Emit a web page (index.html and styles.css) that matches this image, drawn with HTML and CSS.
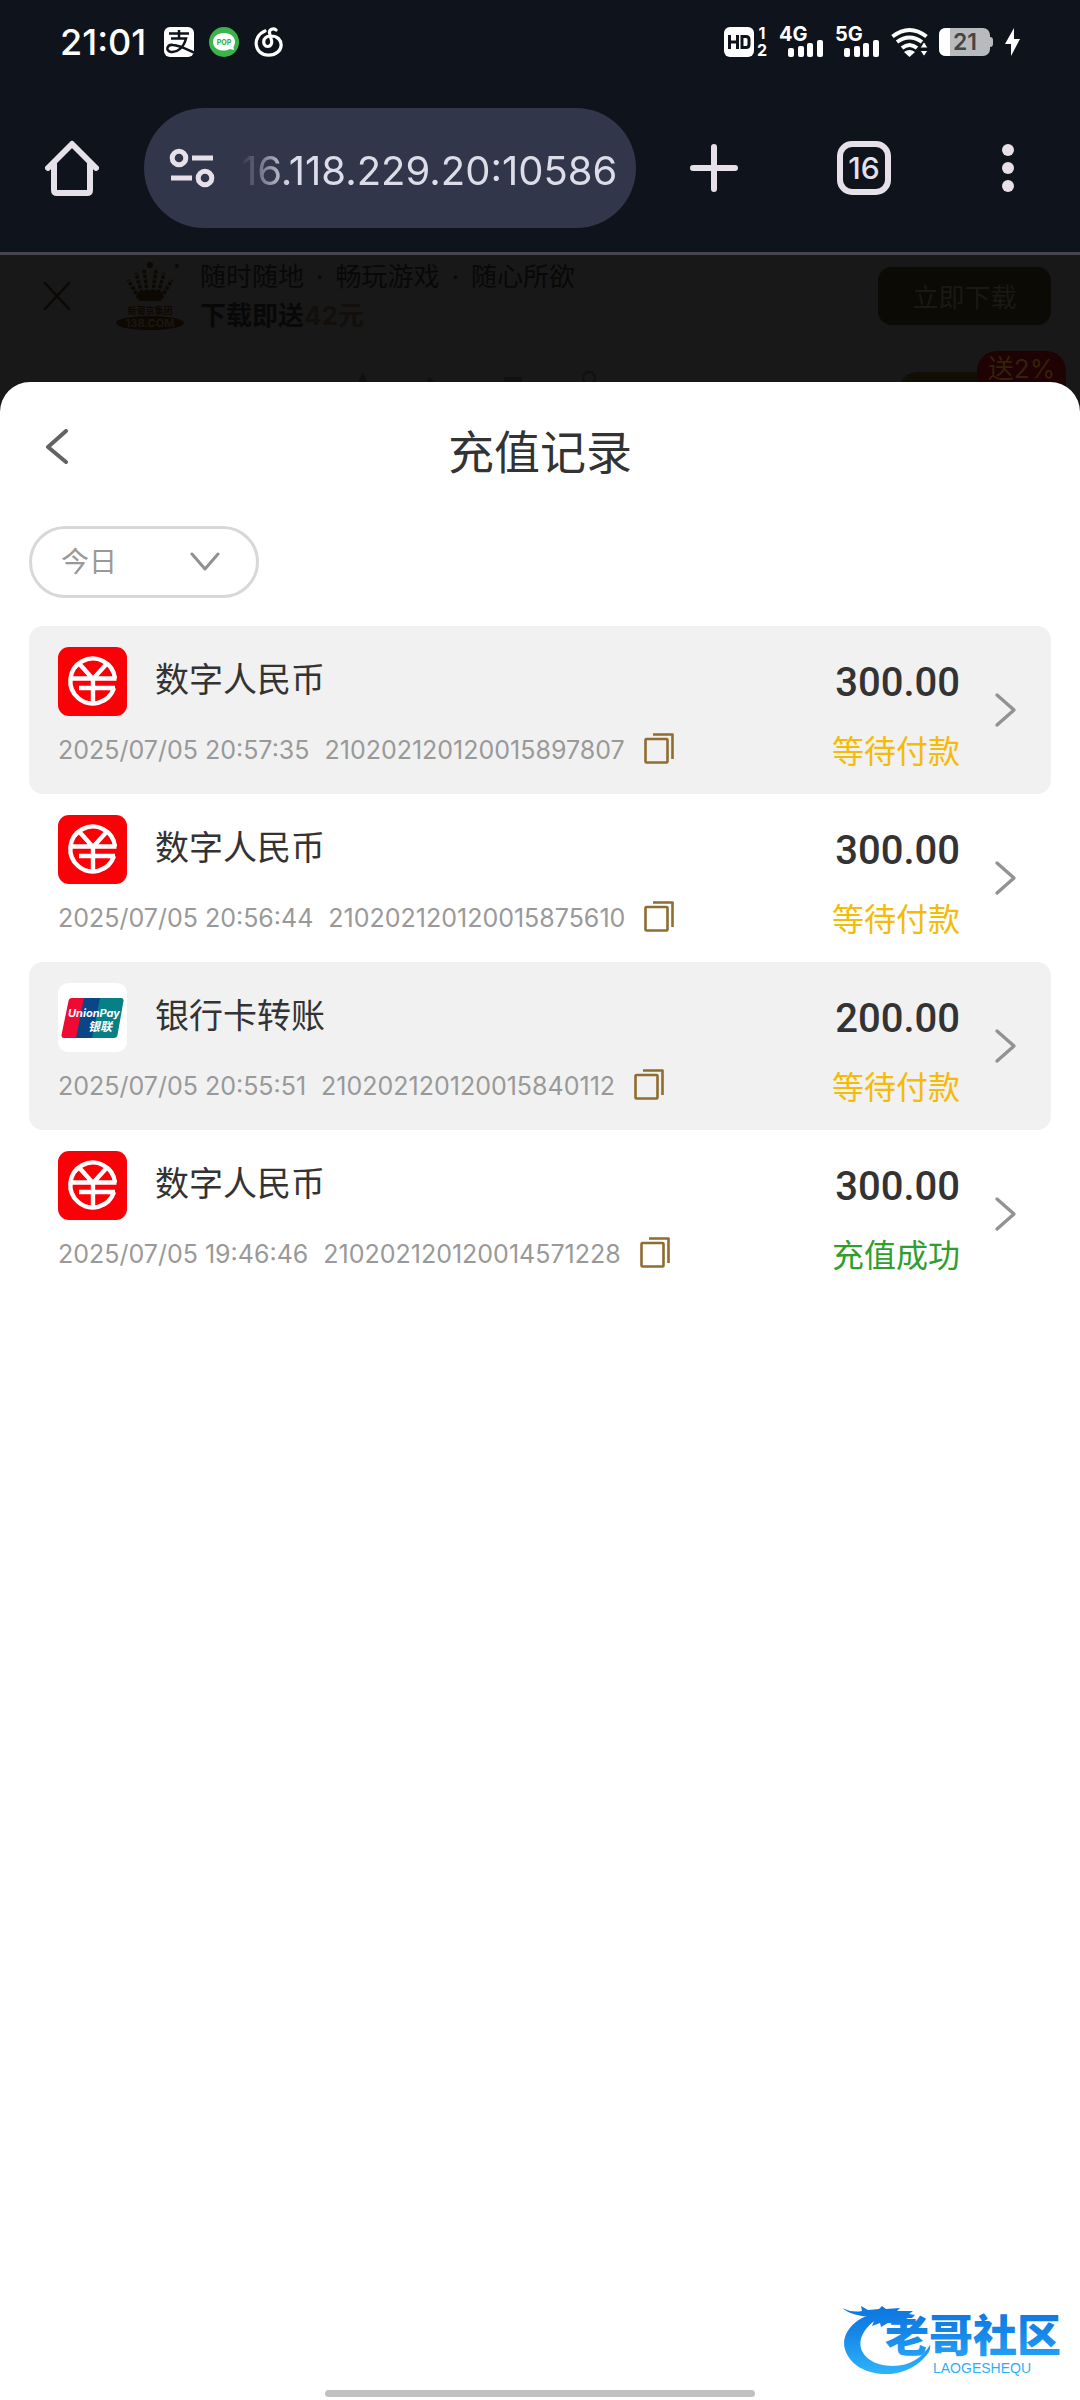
FILE: index.html
```html
<!DOCTYPE html>
<html lang="zh-CN">
<head>
    <meta charset="UTF-8">
    <meta name="viewport" content="width=device-width, initial-scale=1.0">
    <title>充值记录</title>
    <link rel="stylesheet" href="styles.css">
</head>
<body>
    <svg class="sprite" aria-hidden="true">
        <symbol id="ecny" viewBox="0 0 69 69">
            <rect width="69" height="69" rx="11" fill="#fb0007"/>
            <g fill="none" stroke="#fff" stroke-width="4.4">
                <path d="M57 31.5A22.4 22.4 0 1 0 56 41"/>
                <path d="M21.500 17L35 32 48.500 17M12 31.500h46.500M21 41h36M35 31v26"/>
            </g>
        </symbol>
        <symbol id="copy" viewBox="0 0 30 31">
            <g fill="none" stroke="#8f6c30" stroke-width="2.6" stroke-linejoin="round">
                <rect x="1.500" y="6" width="22" height="23.500" rx="1"/>
                <path d="M9 1.500h19.500V26"/>
            </g>
        </symbol>
        <symbol id="next" viewBox="0 0 24 36">
            <path d="M3 3l17 15L3 33" fill="none" stroke="#929292" stroke-width="3.4" stroke-linecap="round" stroke-linejoin="round"/>
        </symbol>
        <symbol id="signal" viewBox="0 0 36 18">
            <g fill="#fff">
                <rect x="0" y="9" width="6" height="9" rx="2"/>
                <rect x="10" y="7" width="6" height="11" rx="2"/>
                <rect x="19" y="4" width="6" height="14" rx="2"/>
                <rect x="29" y="1" width="6" height="17" rx="2"/>
            </g>
        </symbol>
    </svg>

    <header class="browser">
        <div class="status">
            <div class="apps">
                <span class="time">21:01</span>
                <svg width="30" height="30" viewBox="0 0 30 30">
                    <rect width="30" height="30" rx="6" fill="#fff"/>
                    <path d="M5 6.500h20M15 3v8M7 11.500h15C20 20 13 26 7 25c-6-1-4-8 2-7 7 .5 13 4 21 7.500" fill="none" stroke="#0f131b" stroke-width="2.500"/>
                </svg>
                <svg width="30" height="30" viewBox="0 0 30 30">
                    <circle cx="15" cy="15" r="15" fill="#3bb54a"/>
                    <path d="M15 6c7 0 11 4 11 9 0 2-1 4-1.500 5l.5 3-4-1c-8 4-17 0-17-7 0-5 4-9 11-9z" fill="#fff"/>
                    <text x="15" y="18" class="pop">POP</text>
                </svg>
                <svg width="30" height="30" viewBox="0 0 30 30">
                    <path d="M11 4C-2 9-.5 28 14.500 28.200 31 28 31 8.500 16.500 9c-9 .5-8 10.500-3 10.500 4 0 5-4 3.500-8L15.500 6c-.5-4 4-5 6.500-3" fill="none" stroke="#fff" stroke-width="3.200" stroke-linecap="round"/>
                </svg>
            </div>
            <div class="signals">
                <svg width="30" height="30" viewBox="0 0 30 30">
                    <rect width="30" height="30" rx="6" fill="#fff"/>
                    <path d="M5.500 8v14M13.500 8v14M5.500 15h8M18 9.500h4q3 0 3 3v5q0 3-3 3h-4z" fill="none" stroke="#0f131b" stroke-width="3"/>
                </svg>
                <span class="sim"><span>1</span><span>2</span></span>
                <span class="net"><span>4G</span><svg width="36" height="18"><use href="#signal"/></svg></span>
                <span class="net"><span>5G</span><svg width="36" height="18"><use href="#signal"/></svg></span>
                <svg width="37" height="30" viewBox="0 0 37 30">
                    <g fill="none" stroke="#fff" stroke-width="4">
                        <path d="M1.500 9.500q17-13 34 0"/>
                        <path d="M6 15q12.500-9 25 0"/>
                        <path d="M11 21q7.500-6 15 0"/>
                    </g>
                    <path d="M13 25q5.500-4 11 0l-5.500 5z" fill="#fff"/>
                    <path d="M29 21l4-6.500 4 6.500zM29 23.500l4 6 4-6z" fill="#fff" stroke="#0f131b"/>
                </svg>
                <svg width="55" height="28" viewBox="0 0 55 28">
                    <path d="M50 9h1q3 0 3 3v4q0 3-3 3h-1z" fill="#b8bbbd"/>
                    <rect width="51" height="28" rx="7" fill="#b8bbbd"/>
                    <path d="M11 0H7Q0 0 0 7v14q0 7 7 7h4z" fill="#fff"/>
                    <text x="26" y="22" class="charge">21</text>
                </svg>
                <svg width="15" height="28" viewBox="0 0 15 28">
                    <path d="M9 0L0 16h6v12l9-17H9z" fill="#fff"/>
                </svg>
            </div>
        </div>
        <div class="toolbar">
            <button class="tool" aria-label="主页">
                <svg width="54" height="56" viewBox="0 0 54 56">
                    <path d="M3 28L27 4l24 24M9 24v26q0 3 3 3h30q3 0 3-3V24" fill="none" stroke="#e6e1e9" stroke-width="6" stroke-linecap="round" stroke-linejoin="round"/>
                </svg>
            </button>
            <div class="address">
                <svg width="46" height="40" viewBox="0 0 46 40">
                    <g fill="none" stroke="#e6e1e9" stroke-width="5">
                        <circle cx="10" cy="10" r="6.800"/>
                        <circle cx="36" cy="30" r="6.800"/>
                        <path d="M23 10h21M2 30h21"/>
                    </g>
                </svg>
                <input class="url" type="text" value="16.118.229.20:10586" aria-label="网址">
            </div>
            <button class="tool wide" aria-label="新标签页">
                <svg width="48" height="48" viewBox="0 0 48 48">
                    <path d="M24 3v42M3 24h42" stroke="#e6e1e9" stroke-width="6" stroke-linecap="round"/>
                </svg>
            </button>
            <button class="tool"><span class="tabs">16</span></button>
            <button class="tool" aria-label="更多">
                <svg width="12" height="48" viewBox="0 0 12 48" fill="#e6e1e9">
                    <circle cx="6" cy="6" r="6"/>
                    <circle cx="6" cy="24" r="6"/>
                    <circle cx="6" cy="42" r="6"/>
                </svg>
            </button>
        </div>
    </header>

    <!-- página escurecida atrás do painel -->
    <div class="page">
        <div class="banner">
            <button class="close" aria-label="关闭">
                <svg width="28" height="30" viewBox="0 0 28 30">
                    <path d="M1 1l26 28M27 1L1 29" stroke="#0d0902" stroke-width="2.500"/>
                </svg>
            </button>
            <svg class="crown" width="70" height="70" viewBox="0 0 70 70" fill="#0d0902">
                <g fill="none" stroke="#0d0902" stroke-width="3.500" stroke-dasharray="3.500 1.500">
                    <path d="M24 37L13 19M28 37l-7-25M33 37L29 9M37 37l4-28M42 37l7-25M46 37l11-18"/>
                </g>
                <path d="M22 32q13-6 26 0l-2 8H24z"/>
                <circle cx="35" cy="4" r="3"/>
                <circle cx="62" cy="5" r="2"/>
                <ellipse cx="35" cy="62" rx="34" ry="7"/>
                <text x="35" y="53" class="brand">新葡京集团</text>
                <text x="35" y="66" class="site">138.COM</text>
            </svg>
            <div class="promo">
                <p><span>随时随地</span><span>·</span><span>畅玩游戏</span><span>·</span><span>随心所欲</span></p>
                <p><b>下载即送<em>42元</em></b></p>
            </div>
            <button class="download">立即下载</button>
        </div>
        <div class="peek">
            <svg class="marks" width="250" height="12" viewBox="0 0 250 12" fill="#101010">
                <path d="M0 12l5-10 4 10zM68 12l4-5 4 5zM146 7h18v5h-18z"/>
                <circle cx="231" cy="8" r="6" fill="none" stroke="#101010" stroke-width="2"/>
            </svg>
            <div class="gold"></div>
            <span class="bonus">送2%</span>
        </div>
    </div>

    <main class="sheet">
        <div class="sheet-head">
            <button class="back" aria-label="返回">
                <svg width="24" height="36" viewBox="0 0 24 36">
                    <path d="M21 2L3 18l18 15" fill="none" stroke="#636363" stroke-width="4" stroke-linecap="round" stroke-linejoin="round"/>
                </svg>
            </button>
            <h1>充值记录</h1>
        </div>

        <div class="filter">
            <select aria-label="日期">
                <option>今日</option>
                <option>昨日</option>
            </select>
            <svg width="30" height="20" viewBox="0 0 30 20">
                <path d="M2 2l13 15L28 2" fill="none" stroke="#909090" stroke-width="3" stroke-linecap="round" stroke-linejoin="round"/>
            </svg>
        </div>

        <ul class="records">
            <li class="record">
                <div class="info">
                    <div class="method"><svg width="69" height="69"><use href="#ecny"/></svg><span>数字人民币</span></div>
                    <div class="meta"><span>2025/07/05 20:57:35</span><span>210202120120015897807</span><button class="copy" aria-label="复制"><svg width="30" height="31"><use href="#copy"/></svg></button></div>
                </div>
                <div class="result"><strong>300.00</strong><span class="wait">等待付款</span></div>
                <a class="more" href="#" aria-label="详情"><svg width="24" height="36"><use href="#next"/></svg></a>
            </li>
            <li class="record">
                <div class="info">
                    <div class="method"><svg width="69" height="69"><use href="#ecny"/></svg><span>数字人民币</span></div>
                    <div class="meta"><span>2025/07/05 20:56:44</span><span>210202120120015875610</span><button class="copy" aria-label="复制"><svg width="30" height="31"><use href="#copy"/></svg></button></div>
                </div>
                <div class="result"><strong>300.00</strong><span class="wait">等待付款</span></div>
                <a class="more" href="#" aria-label="详情"><svg width="24" height="36"><use href="#next"/></svg></a>
            </li>
            <li class="record">
                <div class="info">
                    <div class="method">
                        <svg width="69" height="69" viewBox="0 0 69 69">
                            <rect width="69" height="69" rx="10" fill="#fff"/>
                            <path d="M14 15h14l-7 40H6q-3 0-2.500-3l7-34q.5-3 3.500-3z" fill="#ee0a32"/>
                            <path d="M26 15h18l-8 40H18z" fill="#0a4587"/>
                            <path d="M42 15h21q3 0 2.500 3l-6 34q-.5 3-3.500 3H34z" fill="#067f86"/>
                            <text x="36" y="34" class="union">UnionPay</text>
                            <text x="42" y="48" class="union-cn">银联</text>
                        </svg>
                        <span>银行卡转账</span>
                    </div>
                    <div class="meta"><span>2025/07/05 20:55:51</span><span>210202120120015840112</span><button class="copy" aria-label="复制"><svg width="30" height="31"><use href="#copy"/></svg></button></div>
                </div>
                <div class="result"><strong>200.00</strong><span class="wait">等待付款</span></div>
                <a class="more" href="#" aria-label="详情"><svg width="24" height="36"><use href="#next"/></svg></a>
            </li>
            <li class="record">
                <div class="info">
                    <div class="method"><svg width="69" height="69"><use href="#ecny"/></svg><span>数字人民币</span></div>
                    <div class="meta"><span>2025/07/05 19:46:46</span><span>210202120120014571228</span><button class="copy" aria-label="复制"><svg width="30" height="31"><use href="#copy"/></svg></button></div>
                </div>
                <div class="result"><strong>300.00</strong><span class="done">充值成功</span></div>
                <a class="more" href="#" aria-label="详情"><svg width="24" height="36"><use href="#next"/></svg></a>
            </li>
        </ul>

        <svg class="watermark" width="224" height="72" viewBox="0 0 224 72">
            <defs>
                <linearGradient id="blue" x1="0" y1="0" x2="0" y2="72" gradientUnits="userSpaceOnUse">
                    <stop offset="0" stop-color="#0c74e0"/>
                    <stop offset=".4" stop-color="#1686e8"/>
                    <stop offset="1" stop-color="#2fb6fb"/>
                </linearGradient>
            </defs>
            <g fill="url(#blue)">
                <path d="M36 9C10 13-3 33 4 48c9 24 54 32 78 6 5-5 7-9 6-13-7 12-20 21-37 21C18 62 4 34 38 13z"/>
                <path d="M0 4q10 5 20 3l-1-5 7 4 11-1 3-3 4 3 14-1-3 3 16 0-4 3 6 1-3 3-10 0 8 4-2 3-12-2-8 0-7 4-1-4-8 3 2-5-8 1 4-5Q10 12 0 4z"/>
                <text x="43" y="48" class="mark">老哥社区</text>
                <text x="91" y="69" class="mark-en">LAOGESHEQU</text>
            </g>
        </svg>
        <div class="home-bar"></div>
    </main>
</body>
</html>
```
FILE: styles.css
```css
* {
    margin: 0;
    padding: 0;
    box-sizing: border-box;
}
body {
    min-height: 100vh;
    display: flex;
    flex-direction: column;
    background-color: #181818;
    color: #333;
    font-family: Inter, "Noto Sans CJK SC", sans-serif;
}
button {
    background: none;
    border: none;
    font-family: inherit;
    cursor: pointer;
}
svg {
    display: block;
    flex-shrink: 0;
}
.sprite {
    position: absolute;
    width: 0;
    height: 0;
}

/* navegador */
.browser {
    background-color: #0f131b;
    border-bottom: 3px solid #47454f;
}
.status {
    display: flex;
    align-items: center;
    justify-content: space-between;
    height: 84px;
    padding: 0 60px;
    color: #fff;
}
.apps {
    display: flex;
    align-items: center;
    gap: 15px;
}
.signals {
    display: flex;
    align-items: center;
    gap: 11px;
}
.time {
    font-size: 36px;
    font-weight: 500;
    margin-right: 3px;
}
.sim {
    display: flex;
    flex-direction: column;
    width: 12px;
    margin-left: -9px;
    font-size: 16px;
    font-weight: 700;
    line-height: 17px;
    text-align: center;
}
.net {
    display: flex;
    flex-direction: column;
    width: 45px;
    height: 30px;
    font-size: 20px;
    font-weight: 700;
    line-height: 14px;
}
.net svg {
    align-self: flex-end;
    margin-top: -2px;
}
.pop {
    fill: #3bb54a;
    font-size: 7px;
    font-weight: 800;
    text-anchor: middle;
}
.charge {
    fill: #454545;
    font-size: 23px;
    font-weight: 600;
    text-anchor: middle;
}
.toolbar {
    display: flex;
    padding: 24px 0;
}
.tool {
    display: flex;
    align-items: center;
    justify-content: center;
    width: 144px;
}
.wide {
    width: 156px;
}
.address {
    flex: 1;
    display: flex;
    align-items: center;
    gap: 26px;
    min-width: 0;
    height: 120px;
    padding: 0 20px 0 25px;
    border-radius: 60px;
    background-color: #32364a;
}
.url {
    flex: 1;
    min-width: 0;
    height: 60px;
    padding-top: 4px;
    background: none;
    border: none;
    color: #dddce9;
    font-family: inherit;
    font-size: 40px;
    font-weight: 400;
    text-align: right;
    mask-image: linear-gradient(to right, transparent, #000 50px);
}
.tabs {
    width: 54px;
    height: 54px;
    border: 6px solid #e6e1e9;
    border-radius: 15px;
    color: #e6e1e9;
    font-size: 30px;
    font-weight: 500;
    line-height: 42px;
}

/* fundo escurecido */
.page {
    height: 157px;
    margin-bottom: -30px;
    overflow: hidden;
}
.banner {
    display: flex;
    align-items: center;
    height: 86px;
    padding: 0 29px 5px 43px;
}
.close {
    margin-right: 44px;
}
.crown {
    margin-right: 15px;
}
.brand {
    font-size: 9px;
    font-weight: 700;
    text-anchor: middle;
}
.site {
    fill: #1a1712;
    font-size: 11px;
    font-weight: 700;
    text-anchor: middle;
}
.promo {
    flex: 1;
    color: #080808;
    font-size: 26px;
    line-height: 39px;
}
.promo p {
    display: flex;
    gap: 12px;
}
.promo em {
    color: #120f0d;
    font-style: normal;
}
.download {
    width: 173px;
    height: 58px;
    border-radius: 14px;
    background-color: #0c0a04;
    color: #1a1916;
    font-size: 26px;
}
.peek {
    display: flex;
    align-items: flex-end;
    justify-content: flex-end;
    height: 71px;
    padding-right: 14px;
}
.marks {
    margin-right: 290px;
    margin-bottom: 30px;
}
.gold {
    width: 100px;
    height: 40px;
    margin-right: -21px;
    border-radius: 20px 0 0 0;
    background-color: #110e05;
}
.bonus {
    width: 89px;
    height: 61px;
    border-radius: 20px;
    background-color: #1f0203;
    color: #33210b;
    font-size: 26px;
    line-height: 36px;
    text-align: center;
}

/* painel */
.sheet {
    position: relative;
    flex: 1;
    display: flex;
    flex-direction: column;
    padding: 0 29px;
    border-radius: 30px 30px 0 0;
    background-color: #fff;
}
.sheet-head {
    display: grid;
    grid-template-columns: 60px 1fr 60px;
    align-items: center;
    height: 144px;
}
.back {
    padding: 0 0 14px 16px;
}
.sheet-head h1 {
    padding-bottom: 10px;
    font-size: 46px;
    font-weight: 400;
    text-align: center;
}
.filter {
    position: relative;
    width: 230px;
    color: #999;
}
.filter select {
    display: block;
    width: 100%;
    height: 72px;
    padding-left: 29px;
    appearance: none;
    border: 3px solid #d8d8d8;
    border-radius: 36px;
    background: none;
    color: inherit;
    font-family: inherit;
    font-size: 28px;
}
.filter svg {
    position: absolute;
    top: 26px;
    right: 39px;
    pointer-events: none;
}
.records {
    margin-top: 28px;
    list-style: none;
}
.record {
    display: flex;
    align-items: center;
    height: 168px;
    padding: 0 33px 0 29px;
    border-radius: 14px;
}
.record:nth-child(odd) {
    background-color: #f1f1f1;
}
.info {
    flex: 1;
    padding-bottom: 6px;
}
.method {
    display: flex;
    align-items: center;
    gap: 28px;
    font-size: 34px;
}
.method span {
    padding-bottom: 8px;
}
.meta {
    display: flex;
    align-items: center;
    gap: 15px;
    margin-top: 17px;
    color: #999;
    font-size: 25px;
    line-height: 32px;
}
.copy {
    padding: 0 0 3px 4px;
}
.result {
    padding-top: 4px;
    text-align: right;
}
.result strong {
    display: block;
    font-family: Roboto, sans-serif;
    font-size: 40px;
    font-weight: 500;
    line-height: 60px;
}
.result span {
    display: block;
    margin-top: 19px;
    font-size: 32px;
    line-height: 40px;
}
.wait {
    color: #f4bb08;
}
.done {
    color: #2f9e2f;
}
.more {
    margin-left: 34px;
}
.watermark {
    position: absolute;
    right: 14px;
    bottom: 24px;
}
.union,
.union-cn {
    fill: #fff;
    font-size: 11px;
    font-style: italic;
    font-weight: 700;
    text-anchor: middle;
}
.union-cn {
    font-size: 12px;
}
.mark {
    font-family: "Noto Sans CJK SC", sans-serif;
    font-size: 44px;
    font-weight: 900;
}
.mark-en {
    font-family: "Liberation Sans", sans-serif;
    font-size: 14px;
}
.home-bar {
    width: 430px;
    height: 7px;
    margin: auto auto 3px;
    border-radius: 4px;
    background-color: #c1c1c1;
}
```
